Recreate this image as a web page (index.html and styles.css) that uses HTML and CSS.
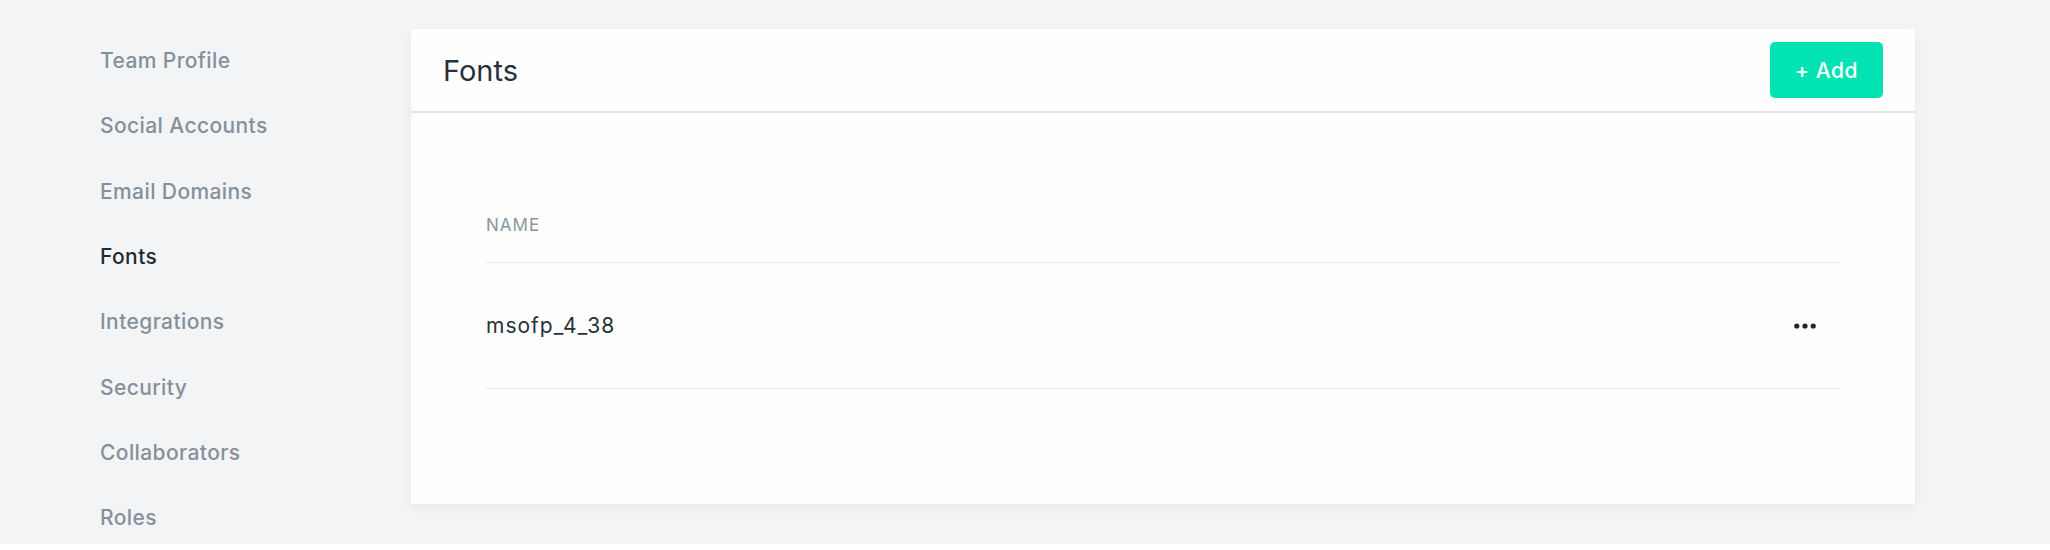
FILE: index.html
```html
<!DOCTYPE html>
<html lang="en">

<head>
    <meta charset="UTF-8">
    <meta name="viewport" content="width=device-width, initial-scale=1.0">
    <title>Fonts - Settings</title>
    <link rel="stylesheet" href="styles.css">
</head>

<body>
    <div class="settingsPage">
        <!-- Left navigation -->
        <nav class="sideNav">
            <a class="navItem" href="#">Team Profile</a>
            <a class="navItem" href="#">Social Accounts</a>
            <a class="navItem" href="#">Email Domains</a>
            <a class="navItem active" href="#">Fonts</a>
            <a class="navItem" href="#">Integrations</a>
            <a class="navItem" href="#">Security</a>
            <a class="navItem" href="#">Collaborators</a>
            <a class="navItem" href="#">Roles</a>
        </nav>

        <!-- Fonts card -->
        <section class="card">
            <div class="cardHeader">
                <h1>Fonts</h1>
                <button class="addBtn">+ Add</button>
            </div>
            <div class="cardBody">
                <div class="listHead">NAME</div>
                <div class="listRow">
                    <span class="fontName">msofp_4_38</span>
                    <button class="moreBtn" aria-label="More">
                        <svg width="22" height="6" viewBox="0 0 22 6">
                            <circle cx="2.8" cy="3" r="2.6" />
                            <circle cx="11" cy="3" r="2.6" />
                            <circle cx="19.2" cy="3" r="2.6" />
                        </svg>
                    </button>
                </div>
            </div>
        </section>
    </div>
</body>

</html>
```

FILE: styles.css
```css
body {
    margin: 0;
    background-color: #fff;
    font-family: Inter, "Open Sans", sans-serif;
    color: #1f2a33;
}

.settingsPage {
    display: flex;
    align-items: flex-start;
    height: 544px;
    background-color: #f3f4f6;
    overflow: hidden;
}

/* Left navigation */
.sideNav {
    display: flex;
    flex-direction: column;
    width: 411px;
    flex-shrink: 0;
    padding: 28px 0 0 100px;
    box-sizing: border-box;
}

.navItem {
    display: flex;
    align-items: center;
    height: 65.3px;
    font-size: 21px;
    font-weight: 500;
    letter-spacing: 0.4px;
    color: #84909a;
    text-decoration: none;
    white-space: nowrap;
}

.navItem.active {
    color: #1f2a33;
}

/* Card */
.card {
    width: 1504px;
    height: 475px;
    margin-top: 29px;
    flex-shrink: 0;
    background-color: #fefefe;
    box-shadow: 0 4px 10px rgba(30, 40, 60, 0.05);
}

.cardHeader {
    display: flex;
    align-items: center;
    justify-content: space-between;
    height: 82px;
    padding: 0 32px;
    border-bottom: 2px solid #e2e6ea;
}

.cardHeader h1 {
    margin: 0;
    font-size: 29px;
    font-weight: 400;
    color: #26313a;
}

.addBtn {
    width: 113px;
    height: 56px;
    border: none;
    border-radius: 5px;
    background-color: #02e3b4;
    color: #fff;
    font-family: inherit;
    font-size: 21px;
    font-weight: 500;
    letter-spacing: 0.5px;
    cursor: pointer;
}

.cardBody {
    padding: 102px 74px 0 75px;
}

.listHead {
    line-height: 20px;
    padding-bottom: 27px;
    border-bottom: 1px solid #e3e9f0;
    font-size: 17px;
    letter-spacing: 1px;
    color: #8a959e;
}

.listRow {
    display: flex;
    align-items: center;
    justify-content: space-between;
    height: 125px;
    border-bottom: 1px solid #e3e9f0;
}

.fontName {
    font-size: 21px;
    letter-spacing: 1px;
    color: #26313a;
}

.moreBtn {
    display: flex;
    margin-right: 25px;
    padding: 0;
    border: none;
    background: none;
    fill: #1d2630;
    cursor: pointer;
}
```
